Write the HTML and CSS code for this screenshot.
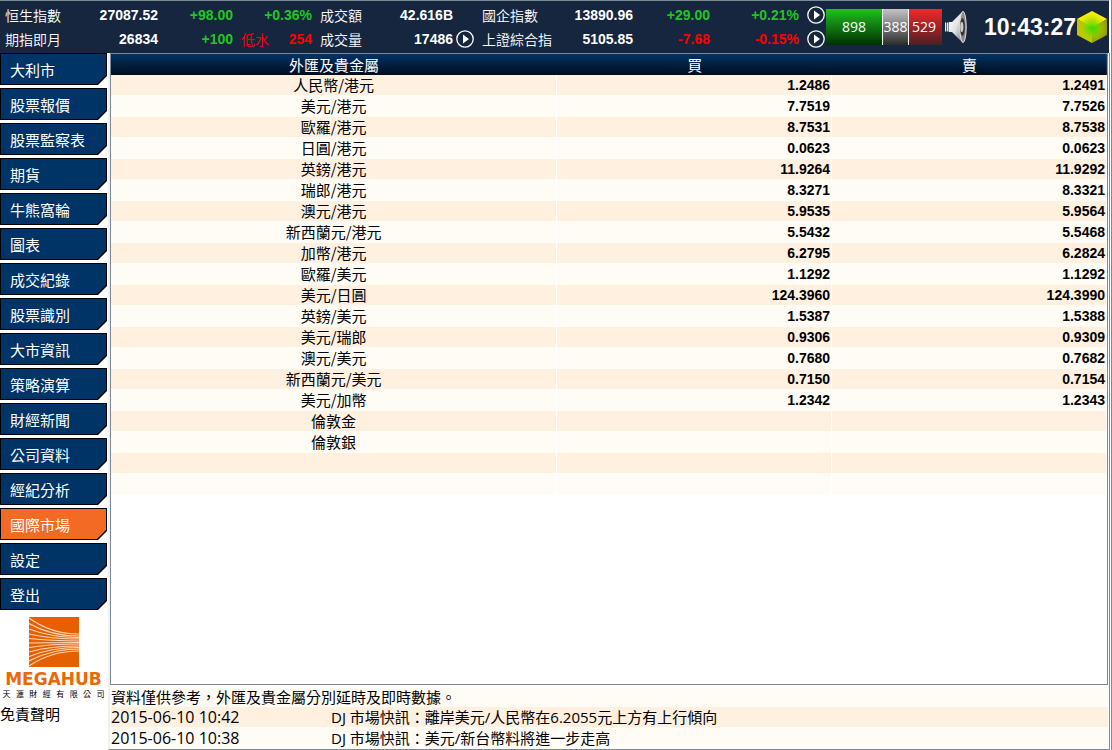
FILE: index.html
```
<!DOCTYPE html>
<html lang="zh-Hant">
<head>
<meta charset="utf-8">
<title>國際市場</title>
<link rel="stylesheet" href="styles.css">
</head>
<body>
<div class="app">
  <header class="topbar">
    <div class="quotes">
      <span class="label">恒生指數</span><b class="num">27087.52</b><b class="num up">+98.00</b><b class="num up wide">+0.36%</b>
      <span class="label gap">成交額</span><b class="num">42.616B</b><span></span>
      <span class="label gap">國企指數</span><b class="num">13890.96</b><b class="num up">+29.00</b><b class="num up">+0.21%</b>
      <button class="play end" aria-label="國企指數"><svg viewBox="0 0 18 18"><circle cx="9" cy="9" r="8.2"/><path d="M7 4.5v9l6-4.5z"/></svg></button>

      <span class="label">期指即月</span><b class="num">26834</b><b class="num up">+100</b><span class="pair down"><span class="label">低水</span><b class="num">254</b></span>
      <span class="label gap">成交量</span><b class="num">17486</b><button class="play" aria-label="成交量"><svg viewBox="0 0 18 18"><circle cx="9" cy="9" r="8.2"/><path d="M7 4.5v9l6-4.5z"/></svg></button>
      <span class="label gap">上證綜合指</span><b class="num">5105.85</b><b class="num down">-7.68</b><b class="num down">-0.15%</b>
      <button class="play end" aria-label="上證綜合指"><svg viewBox="0 0 18 18"><circle cx="9" cy="9" r="8.2"/><path d="M7 4.5v9l6-4.5z"/></svg></button>
    </div>
    <div class="breadth">
      <span class="rise">898</span><span class="flat">388</span><span class="fall">529</span>
    </div>
    <button class="sound" aria-label="聲音">
      <svg viewBox="0 0 22 34">
        <defs>
          <linearGradient id="horn" x1="0" y1="0" x2="1" y2="1"><stop offset="0" stop-color="#fff"/><stop offset=".5" stop-color="#e4e4e4"/><stop offset="1" stop-color="#777"/></linearGradient>
        </defs>
        <path d="M0 12.500h1.300v9H0zM2 12.500h1.500v9H2z" fill="#eee"/>
        <path d="M4 12h3L18 1v32L7 22H4z" fill="url(#horn)"/>
        <ellipse cx="18" cy="17" rx="3.2" ry="15.6" fill="#8a8a8a" stroke="#ddd" stroke-width="1"/>
        <ellipse cx="17.500" cy="17" rx="2.400" ry="9" fill="#333"/>
        <ellipse cx="16.800" cy="17" rx="1.600" ry="5" fill="#ccc"/>
      </svg>
    </button>
    <time class="clock">10:43:27</time>
    <svg class="cube" viewBox="0 0 30 32">
      <defs>
        <radialGradient id="glow" gradientUnits="userSpaceOnUse" cx="15" cy="17" r="16"><stop offset="0" stop-color="#30e000"/><stop offset=".5" stop-color="#8fd800" stop-opacity=".7"/><stop offset="1" stop-color="#d8d800" stop-opacity="0"/></radialGradient>
      </defs>
      <path d="M15 0l15 8-15 9L0 8z" fill="#fff200"/>
      <path d="M0 8l15 9v15L0 24z" fill="#c4c000"/>
      <path d="M30 8l-15 9v15l15-8z" fill="#8f9400"/>
      <path d="M15 0l15 8v16l-15 8-15-8V8z" fill="url(#glow)"/>
    </svg>
  </header>

  <div class="body">
    <aside class="side">
      <nav class="menu">
        <button><span>大利市</span></button>
        <button><span>股票報價</span></button>
        <button><span>股票監察表</span></button>
        <button><span>期貨</span></button>
        <button><span>牛熊窩輪</span></button>
        <button><span>圖表</span></button>
        <button><span>成交紀錄</span></button>
        <button><span>股票識別</span></button>
        <button><span>大市資訊</span></button>
        <button><span>策略演算</span></button>
        <button><span>財經新聞</span></button>
        <button><span>公司資料</span></button>
        <button><span>經紀分析</span></button>
        <button class="active" aria-current="page"><span>國際市場</span></button>
        <button><span>設定</span></button>
        <button><span>登出</span></button>
      </nav>
      <div class="brand">
        <svg class="mark" viewBox="0 0 50 50">
          <path d="M0 0h50v50H0z" fill="#e65f00"/>
          <g fill="none" stroke="#fbd9bd" stroke-width="1.1">
            <path d="M0 1Q22 17 50 17"/><path d="M0 6.500Q22 19 50 19"/><path d="M0 12Q22 20.500 50 20.500"/><path d="M0 17Q22 22 50 22"/><path d="M0 21.500Q22 24 50 24"/>
            <path d="M0 26Q22 25.500 50 25.500"/><path d="M0 30.500Q22 27 50 27"/><path d="M0 35Q22 29 50 29"/><path d="M0 39.500Q22 30.500 50 30.500"/><path d="M0 44Q22 32 50 32"/><path d="M0 49Q22 34 50 34"/>
          </g>
        </svg>
        <strong class="wordmark">MEGAHUB</strong>
        <span class="company">天滙財經有限公司</span>
      </div>
      <a class="disclaimer" href="#">免責聲明</a>
    </aside>

    <main class="content">
      <section class="panel">
        <table class="rates">
          <colgroup><col class="c-name"><col class="c-price"><col class="c-price"></colgroup>
          <thead><tr><th>外匯及貴金屬</th><th>買</th><th>賣</th></tr></thead>
          <tbody>
            <tr><td>人民幣/港元</td><td>1.2486</td><td>1.2491</td></tr>
            <tr><td>美元/港元</td><td>7.7519</td><td>7.7526</td></tr>
            <tr><td>歐羅/港元</td><td>8.7531</td><td>8.7538</td></tr>
            <tr><td>日圓/港元</td><td>0.0623</td><td>0.0623</td></tr>
            <tr><td>英鎊/港元</td><td>11.9264</td><td>11.9292</td></tr>
            <tr><td>瑞郎/港元</td><td>8.3271</td><td>8.3321</td></tr>
            <tr><td>澳元/港元</td><td>5.9535</td><td>5.9564</td></tr>
            <tr><td>新西蘭元/港元</td><td>5.5432</td><td>5.5468</td></tr>
            <tr><td>加幣/港元</td><td>6.2795</td><td>6.2824</td></tr>
            <tr><td>歐羅/美元</td><td>1.1292</td><td>1.1292</td></tr>
            <tr><td>美元/日圓</td><td>124.3960</td><td>124.3990</td></tr>
            <tr><td>英鎊/美元</td><td>1.5387</td><td>1.5388</td></tr>
            <tr><td>美元/瑞郎</td><td>0.9306</td><td>0.9309</td></tr>
            <tr><td>澳元/美元</td><td>0.7680</td><td>0.7682</td></tr>
            <tr><td>新西蘭元/美元</td><td>0.7150</td><td>0.7154</td></tr>
            <tr><td>美元/加幣</td><td>1.2342</td><td>1.2343</td></tr>
            <tr><td>倫敦金</td><td></td><td></td></tr>
            <tr><td>倫敦銀</td><td></td><td></td></tr>
            <tr><td></td><td></td><td></td></tr>
            <tr><td></td><td></td><td></td></tr>
          </tbody>
        </table>
      </section>
      <footer class="news">
        <p class="notice">資料僅供參考，外匯及貴金屬分別延時及即時數據。</p>
        <div class="item shade"><time>2015-06-10 10:42</time><span>DJ 市場快訊：離岸美元/人民幣在6.2055元上方有上行傾向</span></div>
        <div class="item"><time>2015-06-10 10:38</time><span>DJ 市場快訊：美元/新台幣料將進一步走高</span></div>
      </footer>
    </main>
  </div>
</div>
</body>
</html>
```
FILE: styles.css
```
* { box-sizing: border-box; }

body {
  margin: 0;
  font-family: "Open Sans", "Noto Sans CJK TC", sans-serif;
  font-size: 15px;
  line-height: 20px;
  color: #000;
  background: #fff;
}

button {
  margin: 0;
  padding: 0;
  border: 0;
  background: none;
  font: inherit;
  color: inherit;
  text-align: left;
  cursor: pointer;
}

.app {
  display: flex;
  flex-direction: column;
  min-height: 100vh;
  border-right: 1px solid #7b8a99;
}

/* Top bar */
.topbar {
  display: flex;
  align-items: center;
  height: 53px;
  margin-right: 2px;
  border-top: 1px solid #7b8a99;
  background: #16263f;
  color: #fff;
}

.quotes {
  display: grid;
  grid-template-columns: 56px 97px 75px 79px 50px 91px 21px 79px 80px 77px 89px 26px;
  grid-auto-rows: 24px;
  align-items: center;
  padding-left: 5px;
  font-size: 14px;
  white-space: nowrap;
}

.label {
  font-family: "Noto Sans CJK TC", sans-serif;
  font-weight: 350;
}

.gap { padding-left: 8px; }

.num {
  font-family: "Liberation Sans", Arial, sans-serif;
  font-weight: 700;
  text-align: right;
}

.up { color: #1fc71f; }
.down { color: #f00; }

.pair {
  display: flex;
  justify-content: space-between;
  padding-left: 8px;
}

.play {
  display: flex;
  width: 18px;
  height: 18px;
  justify-self: end;
}

.play svg { width: 18px; height: 18px; }
.play circle { fill: none; stroke: #fff; stroke-width: 1.3; }
.play path { fill: #fff; }

.breadth {
  display: flex;
  gap: 1px;
  height: 36px;
  margin-left: 1px;
  background: #fff;
  font-size: 14px;
  font-weight: 400;
  line-height: 36px;
  text-align: center;
}

.rise { width: 56px; background: linear-gradient(#1fc11f, #003000); }
.flat { width: 25px; background: linear-gradient(#c4c4c4, #2c2c2c); }
.fall { width: 33px; padding-right: 3px; background: linear-gradient(#f8252a, #4a2024); }

.sound {
  width: 22px;
  height: 34px;
  margin-left: 3px;
}

.sound svg { display: block; }

.clock {
  margin-left: auto;
  font: 700 23px/28px "Liberation Sans", Arial, sans-serif;
}

.cube {
  width: 30px;
  height: 32px;
  margin: 0 2px 0 1px;
}

/* Main area */
.body {
  display: flex;
  flex: 1;
}

.side {
  flex: none;
  width: 108px;
  display: flex;
  flex-direction: column;
}

.menu {
  display: flex;
  flex-direction: column;
  gap: 3px;
  width: 107px;
}

.menu button {
  height: 32px;
  padding: 1px;
  background: #000;
  color: #fff;
  clip-path: polygon(0 0, 100% 0, 100% 23px, calc(100% - 9px) 100%, 0 100%);
}

.menu span {
  display: block;
  height: 30px;
  padding: 1px 0 0 9px;
  background: #003366;
  line-height: 30px;
  clip-path: polygon(0 0, 100% 0, 100% 21px, calc(100% - 9px) 100%, 0 100%);
}

.menu .active span { background: #f36a24; }

.brand {
  display: flex;
  flex-direction: column;
  align-items: center;
  width: 107px;
  margin-top: 7px;
}

.mark { width: 50px; height: 50px; }

.wordmark {
  margin-top: 2px;
  font: 700 17px/20px "DejaVu Sans", sans-serif;
  color: #e8690b;
}

.company {
  width: 102px;
  font-size: 8px;
  line-height: 10px;
  text-align-last: justify;
}

.disclaimer {
  margin-top: 5px;
  color: #000;
  text-decoration: none;
}

.content {
  display: flex;
  flex: 1;
  flex-direction: column;
  min-width: 0;
  border-right: 1px solid #7b8a99;
  border-bottom: 1px solid #7b8a99;
  border-left: 2px solid #f0f0f0;
  margin-right: 1px;
}

.panel {
  flex: 1;
  margin-right: 1px;
  border: 1px solid #7b8a99;
}

.rates {
  width: 100%;
  border-collapse: separate;
  border-spacing: 0;
  table-layout: fixed;
}

.c-name { width: 44.8%; }
.c-price { width: 27.6%; }

.rates thead tr { background: linear-gradient(#003366, #000c1c); }

.rates th {
  height: 21px;
  padding: 0;
  color: #fff;
  font-weight: 400;
  line-height: 20px;
}

.rates td {
  height: 21px;
  padding: 0 1px;
  border-right: 1px solid #fff;
  border-bottom: 1px solid #fffcf6;
  background: #fffcf6;
  font: 700 14px/20px "Liberation Sans", Arial, sans-serif;
  text-align: right;
  vertical-align: top;
}

.rates tbody tr:nth-child(odd) td { background: #fff0e0; }

.rates td:first-child {
  font: 400 15px/20px "Noto Sans CJK TC", sans-serif;
  text-align: center;
}

/* News strip */
.news {
  padding-left: 1px;
  margin-right: 1px;
  background: #fffcf6;
}

.notice {
  margin: 0;
  padding: 2px 0 0 0;
  font-family: "Noto Sans CJK TC", sans-serif;
}

.item {
  display: grid;
  grid-template-columns: 220px 1fr;
  height: 21px;
}

.item time { font-size: 16px; }
.item.shade { background: #fff0e0; border-bottom: 1px solid #fffcf6; }
```
